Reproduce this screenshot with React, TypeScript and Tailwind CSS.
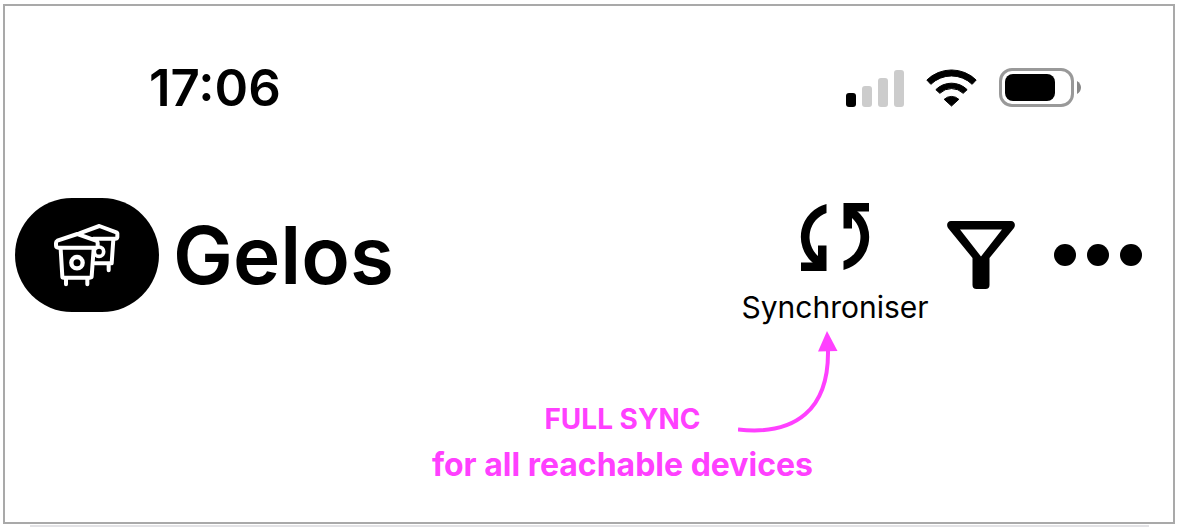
function SignalIcon() {
  return (
    <svg role="img" aria-label="Signal" viewBox="0 0 58 38" className="h-[38px] w-[58px]">
      <rect x="0" y="24" width="10" height="14" rx="3" fill="#000" />
      <rect x="16" y="17" width="10" height="21" rx="3" fill="#ccc" />
      <rect x="32" y="9" width="10" height="29" rx="3" fill="#ccc" />
      <rect x="48" y="1" width="10" height="37" rx="3" fill="#ccc" />
    </svg>
  );
}

function WifiIcon() {
  return (
    <svg role="img" aria-label="Wi-Fi" viewBox="288.5 55 153 114" className="h-[38px] w-[51px]" strokeWidth="3" stroke="#000" strokeLinejoin="round">
      <path d="M291 88A106 106 0 0 1 439 88L427 101A89 89 0 0 0 303 101Z" />
      <path d="M318 117A66.5 66.5 0 0 1 412 117L400 128A50 50 0 0 0 330 128Z" />
      <path d="M343 146A32 32 0 0 1 387 146L365 166Z" />
    </svg>
  );
}

function BatteryIcon() {
  return (
    <svg role="img" aria-label="Battery" viewBox="0 0 82 39" className="h-[39px] w-[82px]">
      <rect x="1.5" y="1.5" width="72" height="36" rx="11.5" fill="none" stroke="#999" strokeWidth="3" />
      <rect x="6" y="6" width="50" height="27" rx="8" />
      <path d="M78 13C80.700 14.500 82 17 82 19.500S80.700 24.500 78 26Z" fill="#888" />
    </svg>
  );
}

function BinsIcon() {
  return (
    <svg aria-hidden="true" viewBox="6 0 270 270" className="size-[90px]" fill="none" stroke="#fff" strokeWidth="12" strokeLinecap="round" strokeLinejoin="round">
      <path d="M118 70L178 48L229 67Q233 69 232 75V81Q231 86 226 86H160" />
      <path d="M220 88L215 160H165M206 162V181" />
      <circle cx="177" cy="125" r="14" strokeWidth="11" />
      <path d="M62 118L67 202H155L163 118V104L112 72L48 94V112Z" fill="#000" stroke="none" />
      <path d="M112 72L52 92Q48 94 48 99V106Q48 113 55 113H167Q173 113 173 106V98Q173 94 168 92Z" fill="#000" />
      <path d="M62 117L67 200Q67 203 71 203H150Q155 203 155 199L161 117" />
      <path d="M78 205V223M142 205V223" />
      <circle cx="111" cy="158" r="17" strokeWidth="13" />
    </svg>
  );
}

function SyncIcon() {
  return (
    <svg aria-hidden="true" viewBox="0 0 70 70" className="size-[70px]">
      <path d="M26.500 2A34 34 0 0 0 13 61L18 61V54A25.500 25.500 0 0 1 26.500 11Z" />
      <path d="M1 60.500H18V43.500H26.500V69H1Z" />
      <path d="M43.500 68A34 34 0 0 0 57 9L52 9V16A25.500 25.500 0 0 1 43.500 59Z" />
      <path d="M69 9.500H52V26.500H43.500V1H69Z" />
    </svg>
  );
}

function FilterIcon() {
  return (
    <svg aria-hidden="true" viewBox="0 0 68 68" className="size-[68px]">
      <path fillRule="evenodd" d="M4 0H64C67.500 0 69 4 67 7L42.500 37V64Q42.500 68 38.500 68H29.500Q25.500 68 25.500 64V37L1 7C-1 4 .5 0 4 0ZM13 8.500L34 35.500L55 8.500Z" />
    </svg>
  );
}

function MoreIcon() {
  return (
    <svg aria-hidden="true" viewBox="0 0 88 22" className="h-[22px] w-[88px]">
      <circle cx="11" cy="11" r="11" />
      <circle cx="44" cy="11" r="11" />
      <circle cx="77" cy="11" r="11" />
    </svg>
  );
}

function StatusBar() {
  return (
    <div className="flex h-[39px] items-center justify-between pr-[92px] pl-36">
      <time className="text-[51px] leading-10 font-semibold">17:06</time>
      <div className="flex items-center gap-[22px]">
        <SignalIcon />
        <WifiIcon />
        <BatteryIcon />
      </div>
    </div>
  );
}

function Header() {
  return (
    <header className="mt-[91px] flex h-[114px] items-center justify-between pr-[31px] pl-[10px]">
      <div className="flex items-center gap-[14px]">
        <div className="flex h-[114px] w-36 items-center justify-center rounded-full bg-black">
          <BinsIcon />
        </div>
        <h1 className="text-[80px] leading-none font-semibold">Gelos</h1>
      </div>
      <nav aria-label="Actions" className="flex h-[106px] items-start">
        <button type="button" className="flex w-[190px] flex-col items-center gap-[15px]">
          <SyncIcon />
          <span className="text-[30px] leading-10">Synchroniser</span>
        </button>
        <button type="button" aria-label="Filtrer" className="mt-[19px] ml-[17px]">
          <FilterIcon />
        </button>
        <button type="button" aria-label="Plus" className="mt-[42px] ml-[39px]">
          <MoreIcon />
        </button>
      </nav>
    </header>
  );
}

function Annotation() {
  return (
    <div className="relative mt-[84px] mr-[360px] mb-[34px] self-end text-center leading-[46px] font-bold text-[#ff40ff]">
      <p className="text-[28px] leading-[46px]">FULL SYNC</p>
      <p className="text-[32px] leading-[46px]">for all reachable devices</p>
      <svg aria-hidden="true" viewBox="0 0 100 102" className="absolute -top-[65px] -right-[25px] h-[102px] w-[100px]">
        <path d="M0 98.500C58 105 91 78 90 19" fill="none" stroke="#ff40ff" strokeWidth="4" />
        <path d="M89 0L99.500 20L80 20.500Z" fill="#ff40ff" />
      </svg>
    </div>
  );
}

export default function App() {
  return (
    <main className="bg-white pt-1 pr-1 pl-[3px] font-['Inter',sans-serif] text-black">
      <section className="flex flex-col border-2 border-[#a9a9a9] bg-white pt-[62px]">
        <StatusBar />
        <Header />
        <Annotation />
      </section>
      <hr className="mt-px mr-[26px] ml-[27px] border-t-2 border-[#e2e2e5]" />
    </main>
  );
}
